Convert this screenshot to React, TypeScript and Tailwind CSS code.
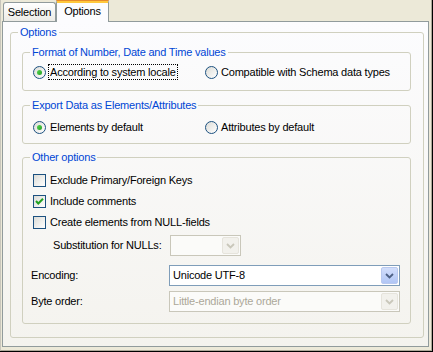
import React from "react";

function Radio({ checked }: { checked?: boolean }) {
  return (
    <span className="w-[13px] h-[13px] rounded-full border border-[#1c5180] bg-linear-to-br from-[#dcdcd7] to-white flex items-center justify-center shrink-0">
      {checked && (
        <span className="w-[5px] h-[5px] rounded-full bg-linear-to-br from-[#55d551] to-[#21a121]" />
      )}
    </span>
  );
}

function Checkbox({ checked }: { checked?: boolean }) {
  return (
    <span className="w-[13px] h-[13px] border border-[#1c5180] bg-linear-to-br from-[#dcdcd7] to-white flex items-center justify-center shrink-0">
      {checked && (
        <svg width="11" height="11" viewBox="0 0 11 11">
          <path d="M2 5 L4.3 7.5 L9 2.8" fill="none" stroke="#21a121" strokeWidth="2" />
        </svg>
      )}
    </span>
  );
}

function Chevron({ color }: { color: string }) {
  return (
    <svg width="9" height="6" viewBox="0 0 9 6">
      <path d="M1 1 L4.5 4.5 L8 1" fill="none" stroke={color} strokeWidth="1.8" />
    </svg>
  );
}

function Combo({
  value,
  disabled,
  width,
}: {
  value?: string;
  disabled?: boolean;
  width: string;
}) {
  return (
    <div
      className={`${width} h-[21px] border flex items-center shrink-0 ${
        disabled ? "border-[#c9c7ba] bg-[#fbfbf9]" : "border-[#7f9db9] bg-white"
      }`}
    >
      <span className={`flex-1 pl-[3px] ${disabled ? "text-[#aca899]" : "text-black"}`}>
        {value}
      </span>
      <span
        className={`w-[17px] h-[17px] mr-px flex items-center justify-center rounded-[2px] border ${
          disabled
            ? "border-[#e6e4dc] bg-[#f2f1ec]"
            : "border-[#b9c9ef] bg-linear-to-b from-[#d2defb] to-[#b1c6f5]"
        }`}
      >
        <Chevron color={disabled ? "#c9c7ba" : "#4d6185"} />
      </span>
    </div>
  );
}

function Group({
  title,
  height,
  className = "",
  children,
}: {
  title: string;
  height: string;
  className?: string;
  children: React.ReactNode;
}) {
  return (
    <fieldset className={`${height} border border-[#d0d0bf] rounded-[3px] ${className}`}>
      <legend className="ml-[7px] px-[2px] leading-[13px] text-[#0046d5]">{title}</legend>
      {children}
    </fieldset>
  );
}

export default function App() {
  return (
    <div className="w-[433px] h-[352px] bg-[#ece9d8] border-r border-b border-[#000] font-['Liberation_Sans',Arial,sans-serif] text-[11px] tracking-[-0.2px] text-black">
      <div className="h-full border-r border-b border-[#aca899] border-l border-l-[#c8c6bc]">
        {/* tabs */}
        <div className="h-[21px] flex items-end pl-[2px]">
          <div className="w-[53px] h-[19px] border border-b-0 border-[#919b9c] rounded-t-[3px] bg-linear-to-b from-white to-[#ecebe6] flex items-center justify-center">
            Selection
          </div>
          <div className="relative z-10 -mb-px w-[53px] h-[22px] border-x border-[#919b9c] rounded-t-[3px] bg-[#fcfcfe] flex flex-col">
            <div className="h-px bg-[#e68b2c] rounded-t-[3px] -mx-px" />
            <div className="h-[2px] bg-[#ffc83c]" />
            <div className="flex-1 flex items-center justify-center pb-[2px]">Options</div>
          </div>
        </div>

        {/* tab page */}
        <div className="ml-px w-[427px] h-[326px] border border-[#919b9c] bg-linear-to-b from-[#fcfcfe] to-[#f4f3ee] pt-[4px] pl-[7px]">
          <Group title="Options" height="h-[312px]" className="w-[414px]">
            <div className="pl-[11px] pr-[12px] pt-[7px]">
              <Group title="Format of Number, Date and Time values" height="h-[45px]">
                <div className="mt-[5px] h-[16px] flex items-center pl-[10px]">
                  <div className="w-[172px] flex items-center">
                    <Radio checked />
                    <span className="ml-[2px] px-px border border-dotted border-black leading-[14px]">
                      According to system locale
                    </span>
                  </div>
                  <div className="flex items-center">
                    <Radio />
                    <span className="ml-[3px]">Compatible with Schema data types</span>
                  </div>
                </div>
              </Group>

              <Group title="Export Data as Elements/Attributes" height="h-[45px]" className="mt-[8px]">
                <div className="mt-[7px] h-[16px] flex items-center pl-[10px]">
                  <div className="w-[172px] flex items-center">
                    <Radio checked />
                    <span className="ml-[4px]">Elements by default</span>
                  </div>
                  <div className="flex items-center">
                    <Radio />
                    <span className="ml-[3px]">Attributes by default</span>
                  </div>
                </div>
              </Group>

              <Group title="Other options" height="h-[173px]" className="mt-[7px]">
                <div className="pt-[8px] flex flex-col">
                  <div className="h-[16px] flex items-center pl-[10px]">
                    <Checkbox />
                    <span className="ml-[4px]">Exclude Primary/Foreign Keys</span>
                  </div>
                  <div className="mt-[5px] h-[16px] flex items-center pl-[10px]">
                    <Checkbox checked />
                    <span className="ml-[4px]">Include comments</span>
                  </div>
                  <div className="mt-[5px] h-[16px] flex items-center pl-[10px]">
                    <Checkbox />
                    <span className="ml-[4px]">Create elements from NULL-fields</span>
                  </div>
                  <div className="mt-[5px] flex items-center pl-[30px]">
                    <span className="w-[117px]">Substitution for NULLs:</span>
                    <Combo disabled width="w-[71px]" />
                  </div>
                  <div className="mt-[9px] flex items-center pl-[8px]">
                    <span className="w-[138px]">Encoding:</span>
                    <Combo value="Unicode UTF-8" width="w-[231px]" />
                  </div>
                  <div className="mt-[5px] flex items-center pl-[8px]">
                    <span className="w-[138px]">Byte order:</span>
                    <Combo value="Little-endian byte order" disabled width="w-[231px]" />
                  </div>
                </div>
              </Group>
            </div>
          </Group>
        </div>
      </div>
    </div>
  );
}
